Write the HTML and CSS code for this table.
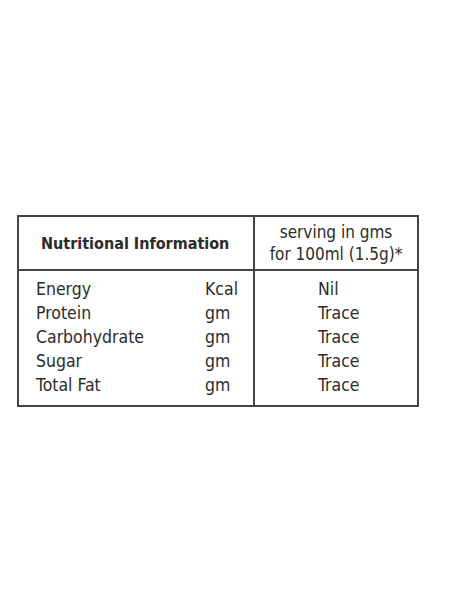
FILE: index.html
```html
<!DOCTYPE html>
<html>
<head>
<meta charset="utf-8">
<link rel="stylesheet" href="styles.css">
</head>
<body>
<div class="page">
  <table class="nutri">
    <tr class="head">
      <th class="c1">Nutritional Information</th>
      <th class="c2">serving in gms<br>for 100ml (1.5g)*</th>
    </tr>
    <tr class="body">
      <td class="c1">
        <div class="rows">
          <span>Energy</span><span>Kcal</span>
          <span>Protein</span><span>gm</span>
          <span>Carbohydrate</span><span>gm</span>
          <span>Sugar</span><span>gm</span>
          <span>Total Fat</span><span>gm</span>
        </div>
      </td>
      <td class="c2">
        <div class="vals">
          <span>Nil</span>
          <span>Trace</span>
          <span>Trace</span>
          <span>Trace</span>
          <span>Trace</span>
        </div>
      </td>
    </tr>
  </table>
</div>
</body>
</html>
```

FILE: styles.css
```css
html, body {
  margin: 0;
  padding: 0;
  background: #fff;
}
.page {
  width: 450px;
  height: 600px;
  padding: 215px 0 0 17px;
  box-sizing: border-box;
}
.nutri {
  border-collapse: collapse;
  font-family: "DejaVu Sans Condensed", "DejaVu Sans", sans-serif;
  color: #2b2b2b;
  font-size: 17.5px;
}
.nutri th, .nutri td {
  border: 2px solid #444;
  padding: 0;
}
.head th {
  height: 51px;
  vertical-align: middle;
}
.head .c1 {
  width: 236px;
  font-size: 16px;
  font-weight: bold;
  text-align: left;
  padding-left: 22px;
  box-sizing: border-box;
}
.head .c2 {
  width: 162px;
  font-size: 17px;
  font-weight: normal;
  text-align: center;
  line-height: 22px;
  padding-bottom: 1px;
}
.body td {
  height: 134px;
  vertical-align: top;
}
.rows {
  display: grid;
  grid-template-columns: 169px auto;
  padding: 6px 0 0 17px;
  line-height: 24px;
}
.vals {
  display: flex;
  flex-direction: column;
  padding: 6px 0 0 63px;
  line-height: 24px;
}
```
